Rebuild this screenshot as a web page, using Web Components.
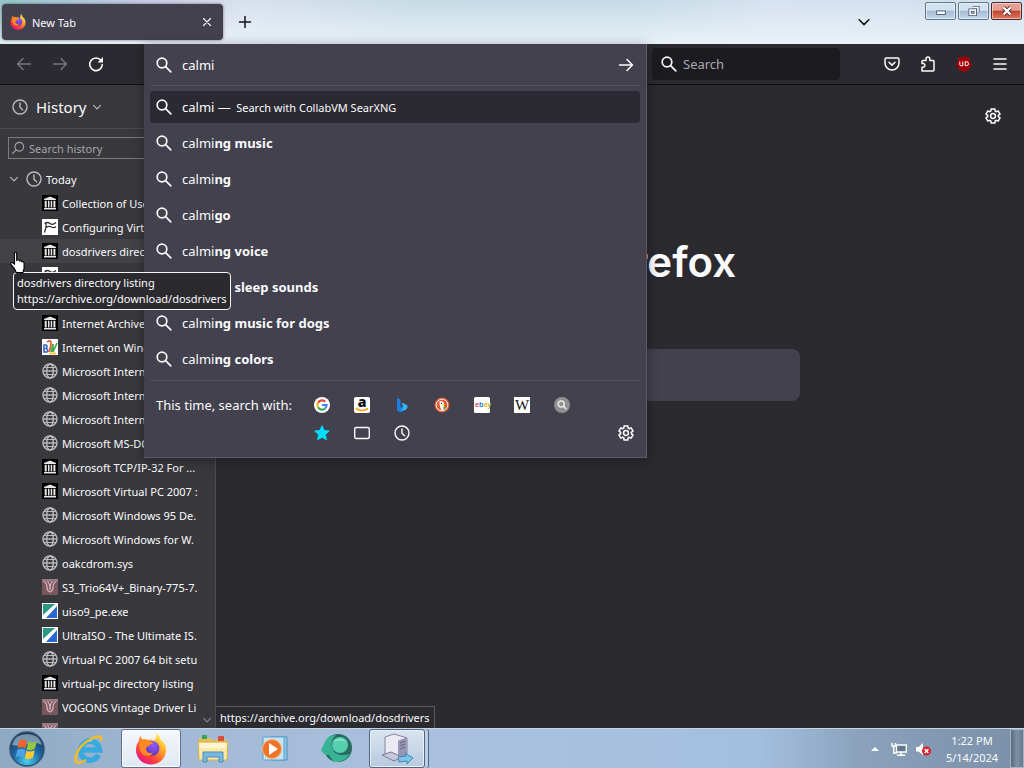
<!DOCTYPE html>
<html lang="en">
<head>
<meta charset="utf-8">
<title>New Tab</title>
<style>
    html, body {
        margin: 0;
        height: 100%;
    }

    body {
        font-family: "Noto Sans", "Open Sans", sans-serif;
        font-size: 11px;
        color: #fbfbfe;
        overflow: hidden;
    }
</style>
</head>
<body>
<browser-desktop></browser-desktop>

<script>
// Outline of a six-toothed cog around 8,8
function cogPath() {
    const points = [];
    for (let i = 0; i < 6; i++) {
        const mid = i * 60 - 90;
        [[-24, 5.3], [-15, 7.3], [15, 7.3], [24, 5.3]].forEach(([offset, r]) => {
            const a = (mid + offset) * Math.PI / 180;
            points.push((8 + r * Math.cos(a)).toFixed(2) + ' ' + (8 + r * Math.sin(a)).toFixed(2));
        });
    }
    return 'M' + points.join('L') + 'Z';
}

const line = 'fill="none" stroke="currentColor" stroke-linecap="round" stroke-linejoin="round"';

const ICONS = {
    firefox: `
        <defs>
            <linearGradient id="flame" x1=".85" y1=".1" x2=".2" y2=".95">
                <stop offset="0" stop-color="#fff44f"/><stop offset=".35" stop-color="#ffa02a"/>
                <stop offset=".7" stop-color="#ff4238"/><stop offset="1" stop-color="#e31587"/>
            </linearGradient>
            <radialGradient id="globe" cx=".6" cy=".3" r=".8">
                <stop offset="0" stop-color="#9059ff"/><stop offset="1" stop-color="#5b2fae"/>
            </radialGradient>
        </defs>
        <path fill="url(#flame)" d="M10.600 0C12 1 12.500 2.200 12.700 3.200C14.800 4.500 15.800 6.600 15.500 9.200C15.100 13.100 11.900 15.700 8 15.700C3.600 15.700.5 12.500.5 8.500C.5 6.500 1.200 4.900 2 4C2 3 2.300 2 2.800 1.500C3 2.400 3.500 3 4 3.300C4.700 3 5.700 3 6.500 3.400C7.600 3.100 8.800 3.400 9.400 3.900C10.500 3.200 10.900 1.600 10.600 0Z"/>
        <circle cx="8.500" cy="7.700" r="3.700" fill="url(#globe)"/>
        <path fill="#ff8a24" d="M2.400 4.300C4 3 6 3.300 6.900 4.300C7.900 4.300 8.900 4.700 9.300 5.200C8 5.300 7.500 5.900 6.800 6.500C5.900 7 5.300 7.200 5.500 8.200C5.800 9.900 7.500 10.400 9 9.700C7.800 12.300 4 12 2.700 9C2 7.300 1.800 5.600 2.400 4.300Z"/>`,
    close: `<path ${line} stroke-width="1.300" d="M4 4l8 8M12 4l-8 8"/>`,
    plus: `<path ${line} stroke-width="1.500" d="M8 2.500v11M2.500 8h11"/>`,
    chevron: `<path ${line} stroke-width="1.800" d="M2.500 5.500L8 11l5.500-5.500"/>`,
    back: `<path ${line} stroke-width="1.500" d="M14.500 8H1.500M7 2.500L1.500 8L7 13.500"/>`,
    forward: `<path ${line} stroke-width="1.500" d="M1.500 8h13M9 2.500L14.500 8L9 13.500"/>`,
    reload: `<path ${line} stroke-width="1.600" d="M13.400 5A6.300 6.300 0 1 0 14.300 8.500"/><path fill="currentColor" d="M15 1v5.500h-5.500z"/>`,
    search: `<g ${line} stroke-width="1.700"><circle cx="6" cy="6" r="4.800"/><path d="M9.600 9.600l5.200 5.200"/></g>`,
    find: `<g ${line} stroke-width="1.300"><circle cx="9.500" cy="6.500" r="5"/><path d="M6 10.200L1.500 14.500"/></g>`,
    clock: `<g ${line} stroke-width="1.400"><circle cx="8" cy="8" r="7"/><path d="M8 4v4.300l2.600 2.400"/></g>`,
    pocket: `<g ${line} stroke-width="1.500"><path d="M2.500 2h11a1.500 1.500 0 0 1 1.500 1.500V7A7 7 0 0 1 1 7V3.500A1.500 1.500 0 0 1 2.500 2z"/><path d="M5 6.300l3 2.800l3-2.800"/></g>`,
    extension: `<path ${line} stroke-width="1.500" d="M2 15V11.200H3.500A1.900 1.900 0 0 0 3.500 7.500H2V5.500A1 1 0 0 1 3 4.500H6V3A1.900 1.900 0 0 1 9.800 3V4.500H13A1 1 0 0 1 14 5.500V14A1 1 0 0 1 13 15Z"/>`,
    ublock: `<path fill="#a0000a" d="M8 0l2 1.200h4v5L16 8l-1.500 2.500L13 14l-5 2-5-2-1.500-3.500L0 8l2-2V1.200h4z"/><path fill="none" stroke="#fff" stroke-width="1" d="M3.800 5.500v3.200a1 1 0 0 0 1 1h2V5.500M9.200 5.700h1.300a2 2 0 0 1 0 4H9.200z"/>`,
    menu: `<path ${line} stroke-width="1.500" d="M2 3h12M2 8h12M2 13h12"/>`,
    gear: `<g ${line} stroke-width="1.500"><path d="${cogPath()}"/><circle cx="8" cy="8" r="2.400"/></g>`,
    google: `<circle cx="8" cy="8" r="8" fill="#fff"/><g fill="none" stroke-width="2.200"><path stroke="#ea4335" d="M4 5.700A4.600 4.600 0 0 1 11.300 4.700"/><path stroke="#fbbc05" d="M4 10.300A4.600 4.600 0 0 1 4 5.700"/><path stroke="#34a853" d="M4 10.300A4.600 4.600 0 0 0 11 11.500"/><path stroke="#4285f4" d="M8 8h4.600A4.600 4.600 0 0 1 11 11.500"/></g>`,
    amazon: `<rect width="16" height="16" rx="2" fill="#fff"/><text x="8" y="10" text-anchor="middle" font-family="Open Sans" font-weight="800" font-size="14" fill="#111">a</text><path fill="none" stroke="#ff9900" stroke-width="1.700" d="M2 11.500Q8 15.500 14 11.500"/>`,
    bing: `<path fill="#1b7de0" d="M3 1l3.500 1.200V10l6-1.500c1 2-.5 4-2 5L6.500 15.500L3 13.500z"/><path fill="#35b7f2" d="M7.500 5.500l5.500 2.500c1 1.600.6 3.600-1.500 5L6.500 13.500l3-3z"/>`,
    duck: `<circle cx="8" cy="8" r="7.500" fill="#de5833"/><circle cx="8" cy="8" r="5.800" fill="none" stroke="#fff" stroke-width=".9"/><path fill="#fff" d="M5.300 4.600Q8 3 9.600 5.500Q10.500 8 9.500 13Q8 13.500 7 12.500Q5.500 9 5.300 4.600z"/><path fill="#fdd20a" d="M8 7.500q2.500-.8 3.700 0q-1 1-3.700 1.200z"/><path fill="#4cba3c" d="M8.500 10.600l3-.8v3z"/><circle cx="7.500" cy="6.200" r=".7" fill="#234"/>`,
    ebay: `<rect width="16" height="16" rx="1.500" fill="#fff"/><g font-family="Open Sans" font-size="7" font-weight="600"><text x="1" y="10"><tspan fill="#e53238">e</tspan><tspan fill="#0064d2">b</tspan><tspan fill="#f5af02">a</tspan><tspan fill="#86b817">y</tspan></text></g>`,
    wikipedia: `<rect width="16" height="16" fill="#fff"/><text x="8" y="13" text-anchor="middle" font-family="Liberation Serif" font-size="15" fill="#111">W</text>`,
    searx: `<circle cx="8" cy="8" r="8" fill="#8f8f8f"/><g fill="none" stroke="#e8e8e8" stroke-width="1.600"><circle cx="7.200" cy="7" r="3"/><path d="M9.500 9.300l3 3"/></g>`,
    star: `<path fill="#00ddff" stroke="#00ddff" stroke-linejoin="round" d="M8 .8l2.100 4.700l5.100.6l-3.800 3.500l1 5.100L8 12.200l-4.400 2.500l1-5.100L.8 6.100l5.100-.6z"/>`,
    tabs: `<rect x=".7" y="2.500" width="14.600" height="11" rx="1.500" ${line} stroke-width="1.400"/>`,
    archive: `<rect width="16" height="16" fill="#000"/><path fill="#e6e6e6" d="M8 1.500L14 4v1H2V4zM2 13h12v1.500H2zM2.700 5.700h2v6.700h-2zM6 5.700h1.500v6.700H6zM8.700 5.700h1.500v6.700H8.700zM11.400 5.700h2v6.700h-2z"/>`,
    article: `<rect width="16" height="16" fill="#fff"/><path fill="none" stroke="#333" stroke-width="1.300" d="M2.500 4.500q3-2 5.500 0t6-1M4 8.500q3-2 5.500-.5t4.500-.5M4 3.500v4q-.5 3-1.500 6"/>`,
    bsn: `<rect width="16" height="16" fill="#fff"/><g fill="none" stroke-width="1.700"><path stroke="#3568c8" d="M2 6v7h3q2-2-1-3.500q2-2 0-3.500z"/><path stroke="#e65c2d" d="M5 3q5-3 4 2t-2 8"/><path stroke="#46a94d" d="M9 13l2-8v8l4-9"/><path stroke="#f4c32c" d="M7 14.500h7"/></g>`,
    globe: `<g fill="none" stroke="#bcbcc0" stroke-width="1.400"><circle cx="8" cy="8" r="7"/><ellipse cx="8" cy="8" rx="3.300" ry="7"/><path d="M1 8h14"/></g><path fill="none" stroke="#bcbcc0" d="M2.500 4.500h11M2.500 11.500h11"/>`,
    vogons: `<rect width="16" height="16" fill="#7a565e"/><path fill="#9a7a80" d="M0 0h16v3H0z"/><path fill="none" stroke="#d5b3b8" stroke-width="1.300" d="M2 3q3 1 3 5t3 5q3-1 3-5t3-5M5.500 3q2.500 1 2.500 8q0-7 2.500-8"/>`,
    ultraiso: `<rect width="16" height="16" fill="#fff"/><path fill="#2a9a83" d="M1 1h12L1 12z"/><path fill="#2867d4" d="M15 3v12H4z"/>`,
    orb: `
        <defs><radialGradient id="orb" cx=".5" cy=".85" r=".8">
            <stop offset="0" stop-color="#45d2f2"/><stop offset=".5" stop-color="#1e6aa6"/><stop offset="1" stop-color="#1a3658"/>
        </radialGradient></defs>
        <circle cx="18" cy="18" r="17" fill="url(#orb)" stroke="#35536f" stroke-width="1.500"/>
        <path fill="#c4d8e6" opacity=".55" d="M3 14Q6 3 18 3T33 14Q26 10 18 13T3 14z"/>
        <path fill="#f0642b" d="M10 10q4-3 8 0l-1.500 7.500q-4-3-8 0z"/><path fill="#94c83d" d="M19.200 10.700q4 2 8.500-.500L26 17.500q-4 3-8.300 1z"/>
        <path fill="#4da3e3" d="M8.200 19q4-3 8 0l-1.500 7.500q-4-3-8 0z"/><path fill="#fdc830" d="M17.400 19.700q4 2 8.300-.500L24 26.500q-4 3-8.200 1z"/>`,
    ie: `
        <path fill="none" stroke="#38a9e0" stroke-width="5.500" d="M25.500 22A9.500 9.500 0 1 1 26.500 17H10"/>
        <path fill="none" stroke="#8fdcf7" stroke-width="1.500" d="M9 13Q12 7 19 8"/>
        <path fill="none" stroke="#f2bd24" stroke-width="2.500" d="M28 8Q30 0 18 6T3 23Q0 34 13 27"/>`,
    folder: `
        <path fill="#e4bf55" d="M2 5h11l2 2h15v19H2z"/><path fill="#3aa457" d="M5 2h5v4H5z"/><path fill="#d9503d" d="M21 3h6v5h-6z"/>
        <path fill="#fbeaa5" stroke="#d5ad4c" d="M1 9h30l-1 18H2z"/><path fill="#ffffff" opacity=".5" d="M3 10h26v5H3z"/>
        <path fill="#78b9df" stroke="#4b8db9" d="M6 29V19h20v10h-4v-5H10v5z"/>`,
    media: `
        <path fill="#8fc7e8" stroke="#4b8fbb" d="M12 4h16v23H12z"/><path fill="#c5e4f5" stroke="#5f9fc8" d="M4 4h21v23H4z"/>
        <circle cx="13" cy="16" r="9.500" fill="#ef7325" stroke="#fbb37e"/><path fill="#fff" d="M10 10l9 6-9 6z"/>`,
    greenorb: `
        <circle cx="17" cy="15" r="14" fill="#286b60"/><path fill="#37b494" d="M3 11Q6 2 15 2Q7 9 13 19Q18 24 29 21Q23 30 13 29Q10 25 8 22Q2 22 0 17z"/>
        <circle cx="19" cy="12" r="8" fill="#55cfae"/><path fill="#a8ecd8" opacity=".7" d="M12 9q7-7 14 0q-7-3-14 0z"/>`,
    server: `
        <path fill="#eceaf4" stroke="#8788a2" d="M4 4l9-3l13 4v18l-8 3L4 20z"/><path fill="#9898b4" d="M17 7.500l9-3V23l-9 3z"/><path stroke="#5f6084" d="M19 10l5-2M19 13l5-2M19 16l5-2"/>
        <path fill="#c8c8dc" stroke="#77789a" d="M1 22l9-3 11 5-8 4z"/><path fill="#7fc4e8" stroke="#4288b3" d="M17 24l8-1-1-3 8 5-6 6v-3l-8 1z"/>`,
    trayarrow: `<path fill="#fff" d="M4 10l4-4 4 4z"/>`,
    network: `<path fill="#64768c" stroke="#fff" stroke-width="1.300" d="M5.500 4h9.800v7H5.500z"/><path fill="none" stroke="#fff" stroke-width="1.500" d="M10 11v3M6 14.300h8M1 2v3h3.500V2M2.700 5v7H6"/>`,
    volume: `<path fill="#fff" d="M1 6h2.500L8 2v12L3.500 10.500H1z"/><circle cx="11.500" cy="10" r="4.500" fill="#d6212b"/><path stroke="#fff" stroke-width="1.400" d="M9.600 8.100l3.800 3.800M13.400 8.100l-3.800 3.800"/>`,
    minimize: `<rect x="3" y="8" width="10" height="4" fill="#fff" stroke="#44546c"/>`,
    restore: `<path fill="none" stroke="#44546c" stroke-width="3.600" d="M6.500 4h6v5M3.500 7h6v5h-6z"/><path fill="none" stroke="#fff" stroke-width="1.800" d="M6.500 4h6v5M3.500 7h6v5h-6z"/>`,
    winclose: `<path stroke="#56282a" stroke-width="4.600" d="M4 4l8 8M12 4l-8 8"/><path stroke="#fff" stroke-width="2.800" d="M4 4l8 8M12 4l-8 8"/>`,
    hand: `<path fill="#fff" stroke="#000" d="M5 1.500q1.500-1 2 .5v6.500l1-.5q1.500 0 1.700 1q1.500-.5 2 .8q1.800-.3 2 1.200v5q-.7 1.500-.9 3.500H6.500q-.5-2-2-4L1.500 12q0-1.800 1.500-1.500L5 12z"/>`
};

const VIEWBOX = { orb: 36, ie: 32, folder: 32, media: 32, greenorb: 32, server: 32, hand: 20 };

class FxIcon extends HTMLElement {
    constructor() {
        super();
        this.attachShadow({ mode: 'open' });
    }

    connectedCallback() {
        const name = this.getAttribute('name');
        const box = VIEWBOX[name] || 16;
        this.shadowRoot.innerHTML = `
            <style>
                :host {
                    display: block;
                    flex: none;
                    width: var(--icon-size, 16px);
                    height: var(--icon-size, 16px);
                }

                svg {
                    display: block;
                    width: 100%;
                    height: 100%;
                    overflow: visible;
                }
            </style>
            <svg viewBox="0 0 ${box} ${box}" aria-hidden="true">${ICONS[name] || ''}</svg>
        `;
    }
}

customElements.define('fx-icon', FxIcon);

class IconButton extends HTMLElement {
    constructor() {
        super();
        this.attachShadow({ mode: 'open' });
    }

    connectedCallback() {
        this.shadowRoot.innerHTML = `
            <style>
                :host {
                    display: block;
                    flex: none;
                    width: var(--button-width, 36px);
                    height: var(--button-height, 32px);
                }

                button {
                    display: flex;
                    align-items: center;
                    justify-content: center;
                    width: 100%;
                    height: 100%;
                    padding: 0;
                    border: 0;
                    border-radius: 4px;
                    background: none;
                    color: inherit;
                }
            </style>
            <button aria-label="${this.getAttribute('label')}"><fx-icon name="${this.getAttribute('icon')}"></fx-icon></button>
        `;
    }
}

customElements.define('icon-button', IconButton);

class TitleBar extends HTMLElement {
    constructor() {
        super();
        this.attachShadow({ mode: 'open' });
    }

    connectedCallback() {
        this.shadowRoot.innerHTML = `
            <style>
                :host {
                    display: flex;
                    flex: none;
                    height: 44px;
                    padding: 0 2px;
                    box-sizing: border-box;
                    color: #15141a;
                    background:
                        linear-gradient(180deg, rgba(236, 244, 250, .1), rgba(236, 244, 250, .9)),
                        linear-gradient(90deg, #86bfc4, #c3c5e2 14%, #d6deec 24%, #c2d8e3 40%, #c0d8e3 62%, #d3e0ee 75%, #cddcea);
                }

                .tab {
                    display: flex;
                    align-items: center;
                    gap: 6px;
                    width: 221px;
                    height: 36px;
                    margin-top: 4px;
                    padding: 0 0 0 8px;
                    box-sizing: border-box;
                    border-radius: 4px;
                    background: #42414d;
                    color: #fbfbfe;
                    box-shadow: 0 0 3px rgba(0, 0, 0, .5);
                }

                .tab span {
                    flex: 1;
                }

                .tab icon-button {
                    --button-width: 32px;
                    --icon-size: 14px;
                }

                .new, .all {
                    margin-top: 6px;
                }

                .new {
                    margin-left: 4px;
                }

                .all {
                    --icon-size: 14px;
                    margin-left: auto;
                    margin-right: 43px;
                }

                .window {
                    display: flex;
                    gap: 2px;
                    margin-top: 2px;
                    height: 18px;
                }

                .window button {
                    display: flex;
                    align-items: center;
                    justify-content: center;
                    width: 31px;
                    padding: 0;
                    border: 1px solid #5f7691;
                    border-radius: 2px;
                    background: linear-gradient(#d3e2f1 45%, #a5bcd6 50%, #c3d6e8);
                    box-shadow: inset 0 0 0 1px rgba(255, 255, 255, .5);
                    --icon-size: 14px;
                }

                .window .close {
                    border-color: #54242b;
                    background: linear-gradient(#e4a092 45%, #c4432e 50%, #da7b60);
                }
            </style>
            <div class="tab">
                <fx-icon name="firefox"></fx-icon>
                <span>New Tab</span>
                <icon-button icon="close" label="Close tab"></icon-button>
            </div>
            <icon-button class="new" icon="plus" label="Open a new tab"></icon-button>
            <icon-button class="all" icon="chevron" label="List all tabs"></icon-button>
            <div class="window">
                <button aria-label="Minimize"><fx-icon name="minimize"></fx-icon></button>
                <button aria-label="Restore"><fx-icon name="restore"></fx-icon></button>
                <button class="close" aria-label="Close"><fx-icon name="winclose"></fx-icon></button>
            </div>
        `;
    }
}

customElements.define('title-bar', TitleBar);

class UrlSuggestion extends HTMLElement {
    constructor() {
        super();
        this.attachShadow({ mode: 'open' });
    }

    connectedCallback() {
        this.shadowRoot.innerHTML = `
            <style>
                :host {
                    display: block;
                }

                button {
                    display: flex;
                    align-items: center;
                    gap: 10px;
                    width: 100%;
                    height: 32px;
                    padding: 0 6px;
                    border: 0;
                    border-radius: 4px;
                    background: none;
                    color: inherit;
                    font: inherit;
                }

                span {
                    white-space: nowrap;
                }

                :host([selected]) button {
                    background: #2b2a33;
                }

                ::slotted(small) {
                    margin-left: 2px;
                    font-size: 11px;
                }
            </style>
            <button><fx-icon name="search"></fx-icon><span><slot></slot></span></button>
        `;
    }
}

customElements.define('url-suggestion', UrlSuggestion);

class UrlBar extends HTMLElement {
    constructor() {
        super();
        this.attachShadow({ mode: 'open' });
    }

    connectedCallback() {
        this.shadowRoot.innerHTML = `
            <style>
                :host {
                    display: block;
                    position: relative;
                    align-self: stretch;
                    font-size: 13px;
                }

                /* the open panel drops over the page below */
                .panel {
                    position: absolute;
                    inset: 0 0 auto 0;
                    z-index: 5;
                    box-sizing: border-box;
                    padding: 0 6px;
                    border: 1px solid #5b5a66;
                    border-width: 0 1px 1px 0;
                    background: #42414d;
                    box-shadow: 0 2px 12px rgba(0, 0, 0, .35);
                }

                .field {
                    display: flex;
                    align-items: center;
                    gap: 10px;
                    height: 41px;
                    padding-left: 6px;
                    border-bottom: 1px solid #52515e;
                }

                input {
                    flex: 1;
                    min-width: 0;
                    padding: 0;
                    border: 0;
                    outline: 0;
                    background: none;
                    color: inherit;
                    font: inherit;
                }

                .field icon-button {
                    --button-width: 28px;
                }

                .results {
                    display: grid;
                    gap: 4px;
                    padding: 5px 0;
                }

                .engines {
                    display: grid;
                    grid-template-columns: 146px 1fr;
                    align-items: center;
                    padding: 10px 0;
                    border-top: 1px solid #52515e;
                    --button-width: 40px;
                    --button-height: 28px;
                }

                .engines > span {
                    padding-left: 6px;
                    white-space: nowrap;
                }

                .line {
                    display: flex;
                    padding-left: 6px;
                }

                .line.local {
                    grid-column: 2;
                }

                .line .settings {
                    --button-width: 28px;
                    margin-left: auto;
                }
            </style>
            <div class="panel">
                <div class="field">
                    <fx-icon name="search"></fx-icon>
                    <input type="text" value="calmi" aria-label="Search or enter address">
                    <icon-button icon="forward" label="Go"></icon-button>
                </div>
                <div class="results">
                    <url-suggestion selected>calmi — <small>Search with CollabVM SearXNG</small></url-suggestion>
                    <url-suggestion>calmi<b>ng music</b></url-suggestion>
                    <url-suggestion>calmi<b>ng</b></url-suggestion>
                    <url-suggestion>calmi<b>go</b></url-suggestion>
                    <url-suggestion>calmi<b>ng voice</b></url-suggestion>
                    <url-suggestion>calmi<b>ng sleep sounds</b></url-suggestion>
                    <url-suggestion>calmi<b>ng music for dogs</b></url-suggestion>
                    <url-suggestion>calmi<b>ng colors</b></url-suggestion>
                </div>
                <div class="engines">
                    <span>This time, search with:</span>
                    <div class="line">
                        <icon-button icon="google" label="Google"></icon-button>
                        <icon-button icon="amazon" label="Amazon"></icon-button>
                        <icon-button icon="bing" label="Bing"></icon-button>
                        <icon-button icon="duck" label="DuckDuckGo"></icon-button>
                        <icon-button icon="ebay" label="eBay"></icon-button>
                        <icon-button icon="wikipedia" label="Wikipedia"></icon-button>
                        <icon-button icon="searx" label="SearXNG"></icon-button>
                    </div>
                    <div class="line local">
                        <icon-button icon="star" label="Bookmarks"></icon-button>
                        <icon-button icon="tabs" label="Tabs"></icon-button>
                        <icon-button icon="clock" label="History"></icon-button>
                        <icon-button class="settings" icon="gear" label="Search settings"></icon-button>
                    </div>
                </div>
            </div>
        `;
    }
}

customElements.define('url-bar', UrlBar);

class NavBar extends HTMLElement {
    constructor() {
        super();
        this.attachShadow({ mode: 'open' });
    }

    connectedCallback() {
        this.shadowRoot.innerHTML = `
            <style>
                :host {
                    display: flex;
                    flex: none;
                    align-items: center;
                    height: 41px;
                    padding: 0 6px;
                    box-sizing: border-box;
                    border-bottom: 1px solid #0f0f14;
                    background: #2b2a30;
                }

                .off {
                    color: #77767c;
                }

                url-bar {
                    flex: 1;
                    margin: 0 5px 0 30px;
                }

                .search {
                    display: flex;
                    align-items: center;
                    gap: 6px;
                    width: 188px;
                    height: 32px;
                    margin-right: 34px;
                    padding-left: 9px;
                    box-sizing: border-box;
                    border-radius: 4px;
                    background: #1c1b20;
                    font-size: 13px;
                }

                .search input {
                    width: 100%;
                    min-width: 0;
                    padding: 0;
                    border: 0;
                    background: none;
                    color: inherit;
                    font: inherit;
                }

                .search input::placeholder {
                    color: #a9a8ae;
                }
            </style>
            <icon-button class="off" icon="back" label="Back"></icon-button>
            <icon-button class="off" icon="forward" label="Forward"></icon-button>
            <icon-button icon="reload" label="Reload"></icon-button>
            <url-bar></url-bar>
            <label class="search">
                <fx-icon name="search"></fx-icon>
                <input type="text" placeholder="Search" aria-label="Search">
            </label>
            <icon-button icon="pocket" label="Save to Pocket"></icon-button>
            <icon-button icon="extension" label="Extensions"></icon-button>
            <icon-button icon="ublock" label="uBlock"></icon-button>
            <icon-button icon="menu" label="Menu"></icon-button>
        `;
    }
}

customElements.define('nav-bar', NavBar);

class HistoryItem extends HTMLElement {
    constructor() {
        super();
        this.attachShadow({ mode: 'open' });
    }

    connectedCallback() {
        this.shadowRoot.innerHTML = `
            <style>
                :host {
                    display: flex;
                    align-items: center;
                    gap: 4px;
                    height: 24px;
                    padding: 0 16px 0 42px;
                }

                :host([active]) {
                    background: #424247;
                }

                a {
                    overflow: hidden;
                    white-space: nowrap;
                    color: inherit;
                    text-decoration: none;
                }
            </style>
            <fx-icon name="${this.getAttribute('icon')}"></fx-icon>
            <a href="#"><slot></slot></a>
        `;
    }
}

customElements.define('history-item', HistoryItem);

class HistorySidebar extends HTMLElement {
    constructor() {
        super();
        this.attachShadow({ mode: 'open' });
    }

    connectedCallback() {
        this.shadowRoot.innerHTML = `
            <style>
                :host {
                    display: flex;
                    flex-direction: column;
                    flex: none;
                    width: 216px;
                    box-sizing: border-box;
                    border-right: 1px solid #4a4a50;
                    background: #38383d;
                    overflow: hidden;
                }

                .head {
                    display: flex;
                    align-items: center;
                    gap: 8px;
                    height: 44px;
                    flex: none;
                    padding: 0 12px;
                    box-sizing: border-box;
                    border: 0;
                    border-bottom: 1px solid #4a4a50;
                    background: none;
                    color: inherit;
                    font: inherit;
                    font-size: 15px;
                }

                .head fx-icon {
                    color: #bcbcc0;
                }

                .head .arrow {
                    --icon-size: 10px;
                    margin-left: -3px;
                }

                .find {
                    display: flex;
                    align-items: center;
                    gap: 4px;
                    flex: none;
                    margin: 8px;
                    height: 22px;
                    box-sizing: border-box;
                    padding: 0 2px;
                    border: 1px solid #7b7b80;
                    color: #a6a6aa;
                    font-size: 11px;
                    --icon-size: 14px;
                }

                .find input {
                    width: 100%;
                    min-width: 0;
                    padding: 0;
                    border: 0;
                    background: none;
                    font: inherit;
                    color: inherit;
                }

                .find input::placeholder {
                    color: inherit;
                }

                .body {
                    display: flex;
                    flex: 1;
                    min-height: 0;
                }

                .list {
                    flex: 1;
                    min-width: 0;
                    overflow: hidden;
                }

                .day {
                    display: flex;
                    align-items: center;
                    gap: 4px;
                    height: 24px;
                    padding-left: 9px;
                }

                .day fx-icon {
                    color: #bcbcc0;
                }

                .day .arrow {
                    --icon-size: 10px;
                    margin-right: 3px;
                }

                .more {
                    display: flex;
                    align-items: flex-end;
                    width: 16px;
                    margin-left: -16px;
                    padding-bottom: 3px;
                    box-sizing: border-box;
                    justify-content: center;
                    color: #85858a;
                    --icon-size: 10px;
                }
            </style>
            <button class="head"><fx-icon name="clock"></fx-icon><span>History</span><fx-icon class="arrow" name="chevron"></fx-icon></button>
            <label class="find"><fx-icon name="find"></fx-icon><input type="text" placeholder="Search history" aria-label="Search history"></label>
            <div class="body">
                <div class="list">
                    <div class="day"><fx-icon class="arrow" name="chevron"></fx-icon><fx-icon name="clock"></fx-icon><span>Today</span></div>
                    <slot></slot>
                </div>
                <div class="more"><fx-icon name="chevron"></fx-icon></div>
            </div>
        `;
    }
}

customElements.define('history-sidebar', HistorySidebar);

class NewTabPage extends HTMLElement {
    constructor() {
        super();
        this.attachShadow({ mode: 'open' });
    }

    connectedCallback() {
        this.shadowRoot.innerHTML = `
            <style>
                :host {
                    display: flex;
                    flex-direction: column;
                    align-items: center;
                    position: relative;
                    flex: 1;
                    min-width: 0;
                    background: #2b2a2f;
                }

                .prefs {
                    align-self: flex-end;
                    margin: 15px 13px 0 0;
                }

                .brand {
                    display: flex;
                    align-items: center;
                    gap: 10px;
                    height: 82px;
                    margin: 88px 0 47px;
                    font-family: Inter, sans-serif;
                    font-size: 42px;
                    font-weight: 600;
                    --icon-size: 82px;
                }

                input {
                    width: 360px;
                    height: 52px;
                    box-sizing: border-box;
                    border: 0;
                    border-radius: 8px;
                    background: #42414d;
                }

                .status {
                    position: absolute;
                    left: 0;
                    bottom: 0;
                    padding: 2px 4px;
                    border: 1px solid #5a595f;
                    border-width: 1px 1px 0 0;
                    background: #2b2a2f;
                    line-height: 17px;
                }
            </style>
            <icon-button class="prefs" icon="gear" label="Personalize new tab"></icon-button>
            <div class="brand"><fx-icon name="firefox"></fx-icon><span>Firefox</span></div>
            <input type="text" aria-label="Search the web">
            <div class="status">https://archive.org/download/dosdrivers</div>
        `;
    }
}

customElements.define('new-tab-page', NewTabPage);

class TaskBar extends HTMLElement {
    constructor() {
        super();
        this.attachShadow({ mode: 'open' });
    }

    connectedCallback() {
        this.shadowRoot.innerHTML = `
            <style>
                :host {
                    display: flex;
                    align-items: stretch;
                    flex: none;
                    height: 40px;
                    box-sizing: border-box;
                    border-top: 1px solid #c5d5e6;
                    background: linear-gradient(90deg, #8fa9c2, #a3bad6 18%, #a9c1df 45%, #a4bfde 74%, #8aa2bc 84%, #7b8fa8);
                }

                button {
                    display: flex;
                    align-items: center;
                    justify-content: center;
                    width: 60px;
                    margin-right: 2px;
                    padding: 0;
                    border: 1px solid transparent;
                    border-radius: 3px;
                    background: none;
                    --icon-size: 32px;
                }

                .start {
                    width: 54px;
                    margin-right: 5px;
                    --icon-size: 36px;
                }

                .focus {
                    border-color: #5b6f8c;
                    background: linear-gradient(#f5f7fb, #dfe8f3);
                    box-shadow: inset 0 0 0 1px #fff;
                }

                .open {
                    width: 56px;
                    border-color: #52667f;
                    background: linear-gradient(#dae4f0, #b7cae0);
                    box-shadow: inset 0 0 0 1px #e8f0f8, 3px 0 0 #bdcfe4, 4px 0 0 #52667f;
                }

                .tray {
                    display: flex;
                    align-items: center;
                    gap: 8px;
                    margin-left: auto;
                }

                .time {
                    width: 70px;
                    margin-left: -2px;
                    padding-right: 3px;
                    text-align: center;
                    line-height: 17px;
                }

                .desktop {
                    width: 14px;
                    margin: 0;
                    border: 1px solid #a4b4c4;
                    border-radius: 0;
                    background: linear-gradient(90deg, #586b7e, #7e92a6 50%, #67798c);
                }
            </style>
            <button class="start" aria-label="Start"><fx-icon name="orb"></fx-icon></button>
            <button aria-label="Internet Explorer"><fx-icon name="ie"></fx-icon></button>
            <button class="focus" aria-label="Firefox"><fx-icon name="firefox"></fx-icon></button>
            <button aria-label="Explorer"><fx-icon name="folder"></fx-icon></button>
            <button aria-label="Media Player"><fx-icon name="media"></fx-icon></button>
            <button aria-label="Browser"><fx-icon name="greenorb"></fx-icon></button>
            <button class="open" aria-label="Setup"><fx-icon name="server"></fx-icon></button>
            <div class="tray">
                <fx-icon name="trayarrow"></fx-icon>
                <fx-icon name="network"></fx-icon>
                <fx-icon name="volume"></fx-icon>
                <div class="time">1:22 PM<br>5/14/2024</div>
            </div>
            <button class="desktop" aria-label="Show desktop"></button>
        `;
    }
}

customElements.define('task-bar', TaskBar);

class HoverTip extends HTMLElement {
    constructor() {
        super();
        this.attachShadow({ mode: 'open' });
        this.shadowRoot.innerHTML = `
            <style>
                :host {
                    display: block;
                    padding: 2px 3px;
                    border: 1px solid #f5f5f5;
                    border-radius: 4px;
                    background: #2b2a2f;
                    line-height: 16px;
                    white-space: nowrap;
                }
            </style>
            <slot></slot>
        `;
    }
}

customElements.define('hover-tip', HoverTip);

class BrowserDesktop extends HTMLElement {
    constructor() {
        super();
        this.attachShadow({ mode: 'open' });
    }

    connectedCallback() {
        this.shadowRoot.innerHTML = `
            <style>
                :host {
                    display: flex;
                    flex-direction: column;
                    position: relative;
                    height: 100vh;
                }

                main {
                    display: flex;
                    flex: 1;
                    min-height: 0;
                }

                hover-tip {
                    position: absolute;
                    left: 13px;
                    top: 272px;
                    z-index: 10;
                }

                .pointer {
                    position: absolute;
                    left: 9px;
                    top: 251px;
                    z-index: 11;
                    --icon-size: 22px;
                }
            </style>
            <title-bar></title-bar>
            <nav-bar></nav-bar>
            <main>
                <history-sidebar>
                    <history-item icon="archive">Collection of Use</history-item>
                    <history-item icon="article">Configuring Virtual</history-item>
                    <history-item icon="archive" active>dosdrivers directory</history-item>
                    <history-item icon="article">Download Win</history-item>
                    <history-item icon="globe">Drivers</history-item>
                    <history-item icon="archive">Internet Archive</history-item>
                    <history-item icon="bsn">Internet on Windows</history-item>
                    <history-item icon="globe">Microsoft Internet</history-item>
                    <history-item icon="globe">Microsoft Internet</history-item>
                    <history-item icon="globe">Microsoft Internet</history-item>
                    <history-item icon="globe">Microsoft MS-DOS</history-item>
                    <history-item icon="archive">Microsoft TCP/IP-32 For ...</history-item>
                    <history-item icon="archive">Microsoft Virtual PC 2007 :</history-item>
                    <history-item icon="globe">Microsoft Windows 95 De.</history-item>
                    <history-item icon="globe">Microsoft Windows for W.</history-item>
                    <history-item icon="globe">oakcdrom.sys</history-item>
                    <history-item icon="vogons">S3_Trio64V+_Binary-775-7.</history-item>
                    <history-item icon="ultraiso">uiso9_pe.exe</history-item>
                    <history-item icon="ultraiso">UltraISO - The Ultimate IS.</history-item>
                    <history-item icon="globe">Virtual PC 2007 64 bit setu</history-item>
                    <history-item icon="archive">virtual-pc directory listing</history-item>
                    <history-item icon="vogons">VOGONS Vintage Driver Li</history-item>
                    <history-item icon="vogons">VOGONS Vintage Driver Li</history-item>
                </history-sidebar>
                <new-tab-page></new-tab-page>
            </main>
            <task-bar></task-bar>
            <hover-tip>dosdrivers directory listing<br>https://archive.org/download/dosdrivers</hover-tip>
            <fx-icon class="pointer" name="hand"></fx-icon>
        `;
    }
}

customElements.define('browser-desktop', BrowserDesktop);
</script>
</body>
</html>
